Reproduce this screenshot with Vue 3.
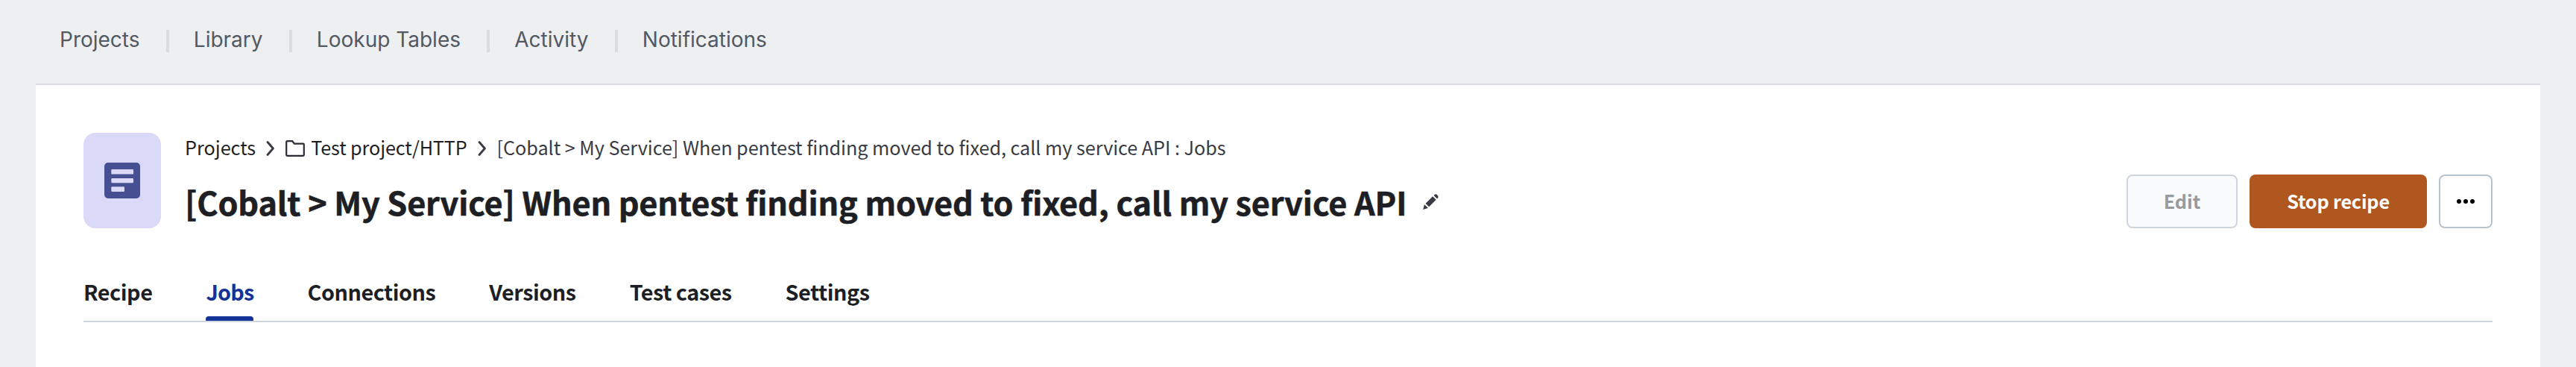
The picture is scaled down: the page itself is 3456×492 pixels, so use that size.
<script setup>
const nav = ['Projects', 'Library', 'Lookup Tables', 'Activity', 'Notifications']
const tabs = ['Recipe', 'Jobs', 'Connections', 'Versions', 'Test cases', 'Settings']
</script>

<template>
  <div class="page">
    <nav class="topnav">
      <template v-for="(item, i) in nav" :key="item">
        <span v-if="i" class="sep"></span>
        <a>{{ item }}</a>
      </template>
    </nav>
    <main class="card">
      <header class="head">
        <div class="tile">
          <svg width="48" height="48" viewBox="0 0 48 48">
            <rect width="48" height="48" rx="5" fill="#464f91" />
            <g fill="#dad9f8">
              <rect x="9.3" y="9" width="29.7" height="6.6" rx="1.2" />
              <rect x="9.3" y="21" width="29.7" height="6.2" rx="1.2" />
              <rect x="9.3" y="32.2" width="17.7" height="6.8" rx="1.2" />
            </g>
          </svg>
        </div>
        <div class="titles">
          <div class="crumbs">
            <a>Projects</a>
            <svg class="chev" width="12" height="20" viewBox="0 0 12 20"><path d="M2 1.5 9.4 10 2 18.5" /></svg>
            <svg class="folder" width="26" height="22" viewBox="0 0 26 22"><path d="M1.2 2.4V19.6Q1.2 20.8 2.4 20.8H23.6Q24.8 20.8 24.8 19.6V5.8Q24.8 4.6 23.6 4.6H12L9.2 1.2H2.4Q1.2 1.2 1.2 2.4Z" /></svg>
            <a class="project">Test project/HTTP</a>
            <svg class="chev" width="12" height="20" viewBox="0 0 12 20"><path d="M2 1.5 9.4 10 2 18.5" /></svg>
            <span class="here">[Cobalt &gt; My Service] When pentest finding moved to fixed, call my service API : Jobs</span>
          </div>
          <div class="titlerow">
            <h1>[Cobalt &gt; My Service] When pentest finding moved to fixed, call my service API</h1>
            <svg class="pencil" width="21" height="21" viewBox="0 0 21 21">
              <path d="M0.2 20.9 1.9 14.4Q2.1 14.1 2.4 14.4L6.6 18.6Q6.8 18.9 6.5 19.1ZM3.6 12.7 13.1 3.2 17.7 7.8 8.2 17.3ZM14.6 1.9 15.6 .9Q17.6 -.4 19.3 1.5 21.3 3.3 20.1 5.3L19.1 6.4Z" />
            </svg>
          </div>
        </div>
        <div class="actions">
          <button class="btn edit">Edit</button>
          <button class="btn stop">Stop recipe</button>
          <button class="btn more">
            <svg width="24" height="6" viewBox="0 0 24 6"><circle cx="3" cy="3" r="3" /><circle cx="12" cy="3" r="3" /><circle cx="21" cy="3" r="3" /></svg>
          </button>
        </div>
      </header>
      <div class="tabs">
        <a v-for="t in tabs" :key="t" class="tab" :class="{ active: t === 'Jobs' }">{{ t }}</a>
      </div>
    </main>
  </div>
</template>

<style>
html, body { margin: 0; background: #eeeff1; }
</style>

<style scoped>
.page { height: 492px; overflow: hidden; background: #eeeff1; font-family: "Noto Sans CJK JP", "Noto Sans CJK SC", sans-serif; color: #1e1f24; }
.topnav { height: 112px; padding: 0 0 6px 80px; box-sizing: border-box; display: flex; align-items: center; font: 28px/34px Inter, sans-serif; color: #525963; }
.sep { width: 4px; height: 30px; border-radius: 1px; background: #dbdce0; margin: 3px 33.3px 0 35px; }
.card { margin: 0 48px; height: 380px; box-sizing: border-box; border-top: 2px solid #dadbe1; padding: 64px 64px 0; background: #fff; }
.head { display: flex; height: 128px; }
.tile { width: 104px; height: 128px; border-radius: 16px; background: #dad9f8; display: flex; align-items: center; justify-content: center; }
.titles { margin-left: 32px; }
.crumbs { height: 40px; display: flex; align-items: center; font-size: 25.2px; line-height: 38px; white-space: nowrap; }
.crumbs a, .here { height: 40px; }
.project { letter-spacing: -0.12px; }
.here { color: #393b44; letter-spacing: -0.04px; }
.chev { fill: none; stroke: #393b44; stroke-width: 2.8; stroke-linecap: round; stroke-linejoin: round; margin: 2px 14px 0; }
.folder { fill: none; stroke: #2a2b33; stroke-width: 2.2; margin-right: 8px; margin-top: 1px; }
.titlerow { height: 72px; margin-top: 12px; display: flex; align-items: center; }
h1 { margin: 8px 0 0; font-size: 43.2px; line-height: 60px; font-weight: 700; letter-spacing: -0.11px; white-space: nowrap; -webkit-text-stroke: 0.6px #1e1f24; }
.pencil { fill: #393b44; margin-left: 21.5px; margin-top: 8px; }
.actions { margin-left: auto; align-self: flex-end; display: flex; gap: 16px; }
.btn { height: 72px; border-radius: 8px; box-sizing: border-box; padding: 0 0 2px; font: 700 25.2px/36px "Noto Sans CJK JP", sans-serif; display: flex; align-items: center; justify-content: center; }
.edit { width: 149px; border: 2px solid #cfd5dc; background: #fafbfd; color: #999a9e; }
.stop { width: 238px; border: 0; background: #b0571f; color: #fff; letter-spacing: -0.2px; }
.more { width: 72px; border: 2px solid #b9c3ce; background: #fff; padding: 0; }
.tabs { margin-top: 52px; height: 72px; border-bottom: 2px solid #cfd4dd; display: flex; gap: 72px; }
.tab { position: relative; font-size: 28.8px; line-height: 66px; font-weight: 700; letter-spacing: -0.47px; }
.active { color: #143396; letter-spacing: -0.75px; }
.active::after { content: ""; position: absolute; left: 0; right: 0; bottom: 0; height: 6px; border-radius: 4px 4px 0 0; background: #143396; }
</style>
